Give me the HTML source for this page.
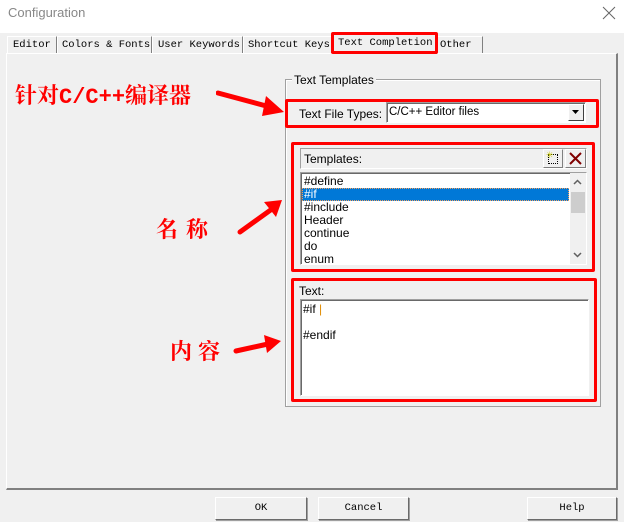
<!DOCTYPE html>
<html><head><meta charset="utf-8"><style>
*{margin:0;padding:0;box-sizing:border-box}
body{width:624px;height:522px;background:#f0f0f0;position:relative;overflow:hidden;font-family:"Liberation Sans",sans-serif;font-size:12px;color:#000}
.a{position:absolute}
.mono{font-family:"Liberation Mono","Noto Sans CJK SC",monospace;font-size:10.5px;white-space:nowrap}
.tab{position:absolute;top:36px;height:17px;border:1px solid #fff;border-right-color:#808080;border-bottom:none;padding-left:2px;line-height:17px;overflow:hidden}
.red{position:absolute;border:3.5px solid #f00;border-radius:2px}
.cn{position:absolute;color:#f00;font-family:"Noto Serif CJK SC","WenQuanYi Zen Hei",serif;font-weight:bold;font-size:22px;line-height:1;white-space:nowrap}
.btn{position:absolute;top:497px;height:23px;border:1px solid #fff;border-right-color:#6a6a6a;border-bottom-color:#6a6a6a;box-shadow:1px 1px 0 #a0a0a0;text-align:center;line-height:21px}
.sunk{border:1px solid #a0a0a0;border-right-color:#fff;border-bottom-color:#fff;box-shadow:inset 1px 1px 0 #696969}
</style></head><body>
<div class="a" style="left:0;top:0;width:624px;height:33px;background:#fff"></div>
<div class="a" style="left:8px;top:5px;font-size:13px;color:#888">Configuration</div>
<svg class="a" style="left:602px;top:6px" width="14" height="14"><path d="M1 1L13 13M13 1L1 13" stroke="#666" stroke-width="1"/></svg>

<div class="a" style="left:6px;top:53px;width:612px;height:437px;border:1px solid #fff;border-right:2px solid #808080;border-bottom:2px solid #808080"></div>
<div class="tab mono" style="left:7px;width:50px;padding-left:5px">Editor</div>
<div class="tab mono" style="left:57px;width:95px;padding-left:4px">Colors &amp; Fonts</div>
<div class="tab mono" style="left:152px;width:91px;padding-left:5px">User Keywords</div>
<div class="tab mono" style="left:243px;width:89px;padding-left:4px">Shortcut Keys</div>
<div class="tab mono" style="left:333px;top:33px;height:21px;width:104px;background:#f0f0f0;line-height:18px;padding-left:4px">Text Completion</div>
<div class="tab mono" style="left:437px;width:46px;padding-left:2px">Other</div>
<div class="red" style="left:331px;top:32px;width:107px;height:22px"></div>

<div class="a" style="left:285px;top:79px;width:316px;height:328px;border:1px solid #a0a0a0;box-shadow:1px 1px 0 #fff inset"></div>
<div class="a" style="left:292px;top:73px;background:#f0f0f0;padding:0 2px">Text Templates</div>

<div class="a" style="left:299px;top:107px">Text File Types:</div>
<div class="a sunk" style="left:386px;top:102px;width:200px;height:21px;background:#fff"></div>
<div class="a" style="left:389px;top:106px;font-size:11.5px;line-height:13px">C/C++ Editor files</div>
<div class="a" style="left:568px;top:104px;width:16px;height:17px;border:1px solid #fff;border-right-color:#404040;border-bottom-color:#404040;background:#f0f0f0"></div>
<svg class="a" style="left:572px;top:110px" width="8" height="5"><path d="M0 0H7L3.5 4Z" fill="#000"/></svg>
<div class="red" style="left:285px;top:99px;width:314px;height:29px"></div>

<div class="a" style="left:300px;top:148px;width:287px;height:21px;border:1px solid #a0a0a0;border-right-color:#fff;border-bottom-color:#fff"></div>
<div class="a" style="left:304px;top:152px">Templates:</div>
<div class="a" style="left:543px;top:149px;width:20px;height:19px;border:1px solid #fff;border-right-color:#808080;border-bottom-color:#808080"></div>
<div class="a" style="left:548px;top:154px;width:10px;height:10px;border:1px dotted #000"></div>
<div class="a" style="left:546px;top:150px;color:#cc0;font-size:9px">✳</div>
<div class="a" style="left:565px;top:149px;width:21px;height:19px;border:1px solid #fff;border-right-color:#808080;border-bottom-color:#808080"></div>
<svg class="a" style="left:569px;top:152px" width="13" height="13"><path d="M1 1L12 12M12 1L1 12" stroke="#800000" stroke-width="2"/></svg>
<div class="a sunk" style="left:300px;top:172px;width:287px;height:93px;background:#fff;overflow:hidden">
 <div style="position:absolute;left:1px;top:2px;width:267px;line-height:13px">
  <div style="padding-left:2px">#define</div>
  <div style="padding-left:2px;background:#0078d7;color:#fff;outline:1px dotted #f0a060;outline-offset:-1px">#if</div>
  <div style="padding-left:2px">#include</div>
  <div style="padding-left:2px">Header</div>
  <div style="padding-left:2px">continue</div>
  <div style="padding-left:2px">do</div>
  <div style="padding-left:2px">enum</div>
 </div>
 <div style="position:absolute;left:269px;top:0;width:16px;height:91px;background:#f0f0f0"></div>
 <div style="position:absolute;left:270px;top:19px;width:14px;height:21px;background:#cdcdcd"></div>
 <svg style="position:absolute;left:272px;top:6px" width="9" height="6"><path d="M1 5L4.5 1.5L8 5" stroke="#606060" stroke-width="1.5" fill="none"/></svg>
 <svg style="position:absolute;left:272px;top:79px" width="9" height="6"><path d="M1 1L4.5 4.5L8 1" stroke="#606060" stroke-width="1.5" fill="none"/></svg>
</div>
<div class="red" style="left:291px;top:142px;width:304px;height:130px"></div>

<div class="a" style="left:299px;top:284px">Text:</div>
<div class="a sunk" style="left:300px;top:299px;width:289px;height:97px;background:#fff"></div>
<div class="a" style="left:303px;top:303px;line-height:13px">#if <span style="color:#e08a00">|</span><br><br>#endif</div>
<div class="red" style="left:291px;top:278px;width:306px;height:124px"></div>

<div class="cn" style="left:15px;top:84px">针对<span style="font-family:'Liberation Mono',monospace">C/C++</span>编译器</div>
<svg class="a" style="left:216px;top:88px" width="72" height="34"><path d="M2 5L54 19" stroke="#f00" stroke-width="5" stroke-linecap="round"/><path d="M50 8L68 24L46 28Z" fill="#f00"/></svg>
<div class="cn" style="left:156px;top:218px;letter-spacing:8px">名称</div>
<svg class="a" style="left:236px;top:196px" width="50" height="42"><path d="M4 36L36 13" stroke="#f00" stroke-width="5" stroke-linecap="round"/><path d="M28 6L46 4L40 21Z" fill="#f00"/></svg>
<div class="cn" style="left:170px;top:340px;letter-spacing:6px">内容</div>
<svg class="a" style="left:232px;top:332px" width="52" height="26"><path d="M4 19L36 12" stroke="#f00" stroke-width="5" stroke-linecap="round"/><path d="M32 3L49 9L35 21Z" fill="#f00"/></svg>

<div class="btn mono" style="left:215px;width:92px">OK</div>
<div class="btn mono" style="left:318px;width:91px">Cancel</div>
<div class="btn mono" style="left:527px;width:90px">Help</div>
</body></html>
